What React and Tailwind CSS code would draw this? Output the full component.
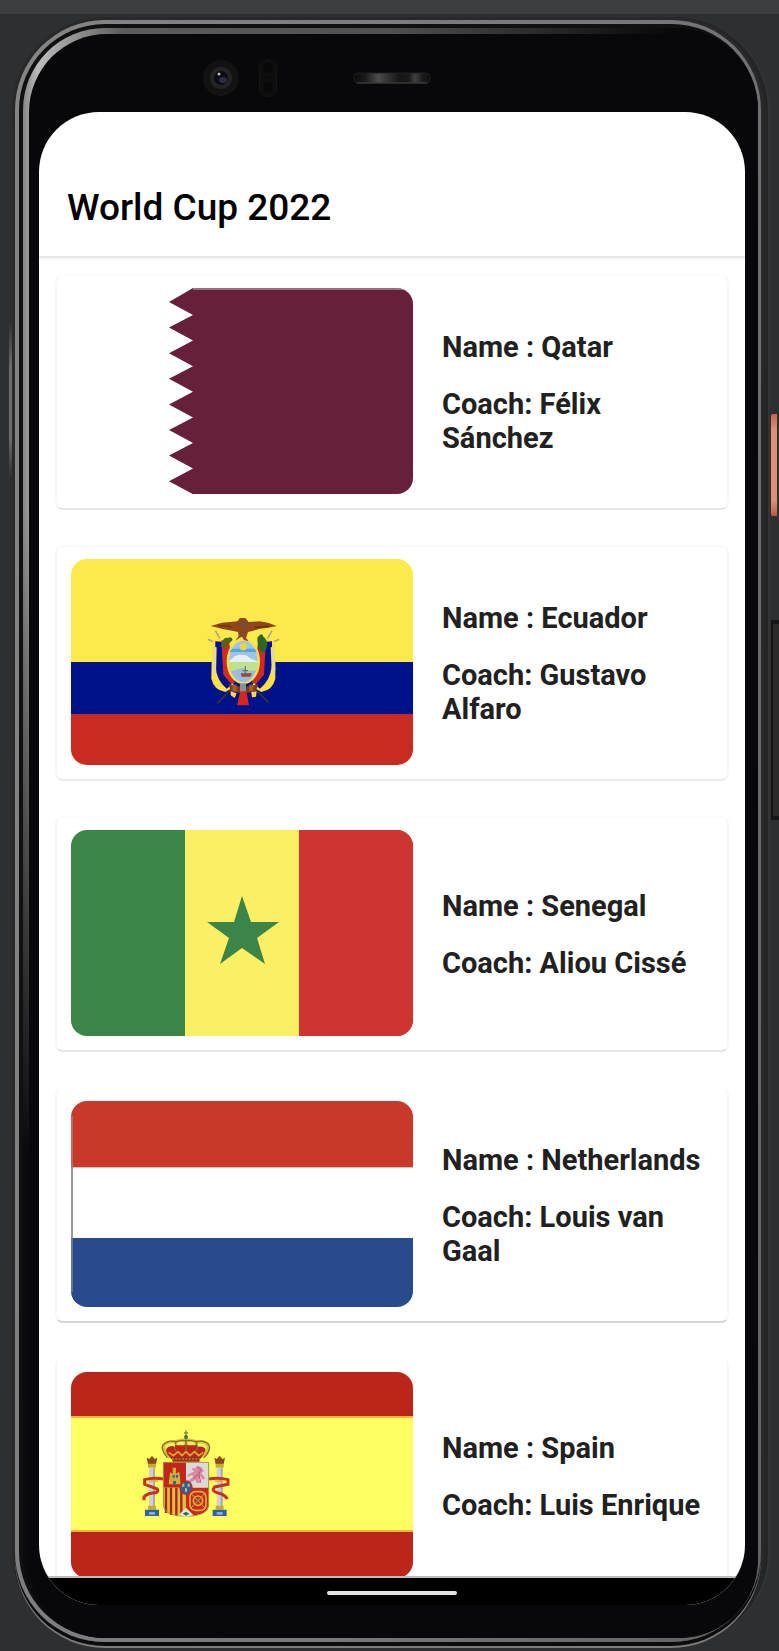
import React from "react";

function QatarFlag() {
  const teeth = [];
  for (let i = 0; i < 8; i++) {
    teeth.push(`98,${14 + i * 25.6} 122,${27 + i * 25.6}`);
  }
  return (
    <svg viewBox="0 0 342 206" className="block h-full w-full" aria-hidden="true">
      <rect width="342" height="206" fill="#fff" />
      <polygon points={`342,0 122,0 ${teeth.join(" ")} 342,206`} fill="#66203c" />
      <rect x="122" width="220" height="2" fill="#fff" opacity=".35" />
    </svg>
  );
}

function EcuadorFlag() {
  return (
    <svg viewBox="0 0 342 206" className="block h-full w-full" aria-hidden="true">
      <rect width="342" height="206" fill="#fce94c" />
      <rect y="103" width="342" height="52" fill="#00128a" />
      <rect y="155" width="342" height="51" fill="#c92a22" />
      <g transform="translate(119 41) scale(.3333)">
        <path d="M128 262L82 310M190 262l46 46" stroke="#33343c" strokeWidth="5" />
        <path d="M76 92l14 24M246 92l-14 24M54 118l30 14M268 118l-32 14" stroke="#b7a878" strokeWidth="5" />
        <path d="M66 128q8-16 24-12l18 60 24 84-26 16q-34-6-42-40z" fill="#fbe04c" />
        <path d="M256 128q-10-16-26-12l-16 60-28 84 28 16q34-6 42-40z" fill="#fbe04c" />
        <path d="M76 124l30 2 18 130-14 10q-30-22-34-70z" fill="#06128c" />
        <path d="M246 124l-30 2-20 130 14 10q30-22 36-70z" fill="#06128c" />
        <path d="M70 140l10 2-2 88-12-18zM254 140l-12 2 4 88 10-18z" fill="#e9dc88" />
        <path d="M94 120l24 10 16 118-10 4-24-28zM228 120l-24 10-18 118 12 4 24-28z" fill="#d12b20" />
        <ellipse cx="160" cy="184" rx="50" ry="69" fill="#f5df56" />
        <ellipse cx="160" cy="184" rx="43" ry="62" fill="#9cc4e8" />
        <path d="M126 146h68l6 10h-82z" fill="#4fa8e2" />
        <circle cx="160" cy="140" r="11" fill="#efd13e" />
        <path d="M117 184l18-16 14-4 20 2 14 10 20 8v4h-86z" fill="#e9eef5" />
        <path d="M117 186h86q0 16-6 26h-26l-14-8-34 10q-6-16-6-28z" fill="#bfe38b" />
        <path d="M124 214l34-10 14 8h24q-10 32-36 34-24-2-36-32z" fill="#9bbce0" />
        <path d="M152 220h34l-5 10h-26z" fill="#9b4a2c" />
        <path d="M166 198v22M158 212h16" stroke="#54617a" strokeWidth="3" />
        <path d="M92 138q8-30 22-24 12-6 14 6l-16 16-4 14z" fill="#466a20" />
        <path d="M104 122l10 14M98 140l12 6" stroke="#a33c20" strokeWidth="5" />
        <path d="M202 114q14-20 18-4 12 8 12 26-8 30-20 20-10-14-10-42z" fill="#2e6721" />
        <path d="M62 78l34-10 24-2 22-2 8-10h16l10 12 32-2 26 4 26 10-28 6-22 2-20 6-16 4-6 18 8 10-14-4-6-10-8 4-12 8 10-14-2-12-18-4-24-4z" fill="#8c471b" />
        <path d="M84 76l40 4M238 78l-44 4" stroke="#6b3011" strokeWidth="4" />
        <circle cx="160" cy="72" r="7" fill="#5b5560" />
        <path d="M116 252q44 16 88 0l-6 22q-38 10-76 0z" fill="#7d3d1b" />
        <path d="M128 254h12v20h-12zM178 254h12v20h-12z" fill="#a75c30" />
        <path d="M150 250h18v26h-18z" fill="#899299" />
        <path d="M122 274l18 6-6 14-12-8zM184 276l16-2-2 16-12 2z" fill="#fbd848" />
        <path d="M151 274h18l8 42h-36z" fill="#d5271d" />
      </g>
    </svg>
  );
}

function SenegalFlag() {
  return (
    <svg viewBox="0 0 342 206" className="block h-full w-full" aria-hidden="true">
      <rect width="342" height="206" fill="#3c8447" />
      <rect x="114" width="114" height="206" fill="#fbef63" />
      <rect x="228" width="114" height="206" fill="#cf3530" />
      <polygon
        points="171,66 180,92 208,92 186,108 194,134 171,118 149,134 158,108 136,92 163,92"
        fill="#3c8447"
      />
    </svg>
  );
}

function NetherlandsFlag() {
  return (
    <svg viewBox="0 0 342 206" className="block h-full w-full" aria-hidden="true">
      <rect width="342" height="206" fill="#fefefe" />
      <rect width="342" height="66" fill="#c8382b" />
      <rect y="66" width="342" height="1" fill="#e9bab5" />
      <rect y="137" width="342" height="69" fill="#294b8b" />
      <rect y="15" width="2" height="176" fill="#b5b5b5" opacity=".4" />
      <rect y="66" width="2" height="71" fill="#999" />
    </svg>
  );
}

function Pillar({ x }) {
  return (
    <g transform={`translate(${x} 0)`}>
      <path d="M-16 128l8 4 8-10 8 10 8-4-4 20h-24z" fill="#8a4a1c" />
      <path d="M-12 146h24v12h-24z" fill="#c8ab2e" />
      <path d="M-9 158h18v116h-18z" fill="#d0d0d6" />
      <path d="M3 158h6v116h-6z" fill="#a9a9b0" />
      <path d="M-12 272h24v12h-24z" fill="#c8ab2e" />
      <path d="M-21 284h42v19h-42z" fill="#2c61ad" />
      <path d="M-9 291h18v8h-18z" fill="#8eadd0" />
    </g>
  );
}

function SpainFlag() {
  return (
    <svg viewBox="0 0 342 206" className="block h-full w-full" aria-hidden="true">
      <rect width="342" height="206" fill="#ba271a" />
      <rect y="44" width="342" height="116" fill="#ecb63f" />
      <rect y="46" width="342" height="112" fill="#ffff61" />
      <g transform="translate(59 43) scale(.3333)">
        <Pillar x={66} />
        <Pillar x={269} />
        <path d="M100 192q-30-6-56 2v14l38 14q6 12-14 12-18 2-26 12v10M236 192q30-6 58 2v14l-40 8q-12 12 10 18 20 4 28 18" fill="none" stroke="#c43222" strokeWidth="9" />
        <path d="M58 198h26M254 198h26" stroke="#dda82e" strokeWidth="4" />
        <path d="M100 142h68v76h-68z" fill="#c02619" />
        <path d="M168 142h68v76h-68z" fill="#dadada" />
        <path d="M100 218h68v84q-66 0-68-30z" fill="#e0bd3a" />
        <path d="M108 218v76M123 218v82M139 218v84M154 218v84" stroke="#a92319" strokeWidth="7" />
        <path d="M168 218h68v54q-2 30-68 30z" fill="#c62b1d" />
        <rect x="180" y="230" width="48" height="56" rx="16" fill="none" stroke="#dfae35" strokeWidth="5" />
        <circle cx="204" cy="257" r="14" fill="none" stroke="#dfae35" strokeWidth="5" />
        <path d="M182 234l44 46M226 234l-44 46" stroke="#dfae35" strokeWidth="3" />
        <circle cx="204" cy="257" r="5" fill="#70934b" />
        <path d="M116 208l4-36 8 4v-18h10v18l10-6 4 38z" fill="#cfae33" />
        <path d="M128 180h6v8h-6zM138 180h6v8h-6zM129 198h9v10h-9z" fill="#3164a6" />
        <path d="M184 160h12l6-8 12 4 8 12-8 6 12 16-8 4-8-10-4 10 10 10h-16l-4-10-16 10-6-6 16-12-4-6-14 6 2-8 18-8z" fill="#dc8a9f" />
        <path d="M202 156l10 8-6 14-16 12M206 178l6 22" stroke="#b7506e" strokeWidth="3" fill="none" />
        <ellipse cx="168" cy="218" rx="20" ry="22" fill="#c62b1d" />
        <ellipse cx="168" cy="218" rx="16" ry="18" fill="#285fae" />
        <path d="M160 206v9M176 206v9M168 220v10" stroke="#dcc43d" strokeWidth="6" />
        <path d="M100 272q4 32 68 32t68-32V142H100z" fill="none" stroke="#a59049" strokeWidth="3" />
        <path d="M146 300l22-22 22 22-22 6z" fill="#e6e6e0" />
        <path d="M158 296l10-6 10 6-10 6z" fill="#287153" />
        <path d="M112 130q-20-24-15-38 12-18 38-16 32-12 66 0 28-4 39 16 4 16-18 38z" fill="#dbc33c" />
        <path d="M111 116q-6-16 4-23 18-4 53-4 36 0 52 4 10 8 2 23l-12 16h-86z" fill="#be2418" />
        <path d="M112 128q-22-28-13-38 14-16 40-10 28-8 58 0 30-6 40 10 8 12-14 38M137 108q-8-16 2-28M199 108q8-16-2-28M168 108V76" fill="none" stroke="#7f7227" strokeWidth="4" />
        <path d="M105 92q14-12 30-6v9q-16-6-28 8zM143 82q10-4 20 0v9h-22zM173 82q10-4 20 0l2 9h-22zM202 86q18-4 28 8l-2 8q-10-10-24-7z" fill="#fbf26b" />
        <path d="M116 112l14 10 14-12 12 12 12-12 12 12 14-12 12 12 14-10" fill="none" stroke="#d2ae33" strokeWidth="5" />
        <path d="M124 126h88l-4 14h-80z" fill="#98301a" />
        <path d="M126 132h84" stroke="#cba93a" strokeWidth="3" strokeDasharray="6 4" />
        <path d="M168 46v28M162 54h12" stroke="#8d8b36" strokeWidth="4" />
        <circle cx="168" cy="66" r="6" fill="#3d735b" />
      </g>
    </svg>
  );
}

const teams = [
  { name: "Qatar", coach: "Félix Sánchez", Flag: QatarFlag, edge: "border-t-[#fcfcfc] border-b-[#e8e8e8]" },
  { name: "Ecuador", coach: "Gustavo Alfaro", Flag: EcuadorFlag, edge: "border-t-[#f8f8f8] border-b-[#ececec]" },
  { name: "Senegal", coach: "Aliou Cissé", Flag: SenegalFlag, edge: "border-t-[#fcfcfc] border-b-[#e6e6e6]" },
  { name: "Netherlands", coach: "Louis van Gaal", Flag: NetherlandsFlag, edge: "border-t-[#fefefe] border-b-[#d6d6d6]" },
  { name: "Spain", coach: "Luis Enrique", Flag: SpainFlag, edge: "border-t-[#fefefe] border-b-[#d6d6d6]" },
];

function TeamCard({ name, coach, Flag, edge }) {
  return (
    <li className={`flex shrink-0 items-center gap-[29px] rounded-lg border-2 border-x-[#f7f7f7] px-3.5 pt-3 pb-3.5 ${edge}`}>
      <div className="h-[206px] w-[342px] shrink-0 overflow-hidden rounded-2xl">
        <Flag />
      </div>
      <div className="flex min-w-0 flex-1 flex-col gap-[23px] pt-[3px] text-[29px] leading-[34px] font-bold text-[#212121]">
        <h2>{`Name : ${name}`}</h2>
        <p>{`Coach: ${coach}`}</p>
      </div>
    </li>
  );
}

function TopHardware() {
  return (
    <div className="flex h-[78px] shrink-0 items-center pt-2.5 pl-[164px]">
      <svg width="36" height="36" viewBox="0 0 36 36" aria-hidden="true">
        <circle cx="18" cy="18" r="18" fill="#121213" />
        <circle cx="18" cy="18" r="11" fill="#242426" />
        <circle cx="18" cy="18" r="7" fill="#0b0b10" />
        <ellipse cx="20" cy="20" rx="4" ry="3" fill="#2b2d4c" />
        <circle cx="16" cy="14" r="1.5" fill="#b9b9bd" />
      </svg>
      <svg width="18" height="38" viewBox="0 0 18 38" className="ml-5" aria-hidden="true">
        <rect x=".5" y=".5" width="17" height="37" rx="8.5" fill="#0d0d0e" stroke="#161618" />
        <circle cx="9" cy="9" r="6" fill="#080809" stroke="#121213" />
        <circle cx="9" cy="28" r="6" fill="#080809" stroke="#121213" />
      </svg>
      <svg width="78" height="12" viewBox="0 0 78 12" className="ml-[76px]" aria-hidden="true">
        <defs>
          <linearGradient id="grille">
            <stop offset="0" stopColor="#0a0a0a" />
            <stop offset=".15" stopColor="#1b1b1b" />
            <stop offset=".32" stopColor="#4c4c4c" />
            <stop offset=".6" stopColor="#151515" />
            <stop offset=".72" stopColor="#191919" />
            <stop offset=".8" stopColor="#404040" />
            <stop offset=".9" stopColor="#1c1c1c" />
            <stop offset="1" stopColor="#0d0d0d" />
          </linearGradient>
        </defs>
        <rect x="1" y="1" width="76" height="10" rx="4" fill="url(#grille)" stroke="#1e1e1f" />
        <path d="M4 11h70" stroke="#454545" />
      </svg>
    </div>
  );
}

export default function App() {
  return (
    <div className="relative flex h-screen flex-col overflow-hidden bg-[#2e2f31] font-[Roboto,sans-serif]">
      <div className="h-3.5 shrink-0 bg-[#3d3e40]" />

      <div className="absolute top-[318px] left-[9px] h-[162px] w-1 rounded-sm bg-[linear-gradient(#2a2a2b,#6a6c6e_30%,#6a6c6e_75%,#2a2a2b)]" />
      <div className="absolute top-[414px] right-0.5 h-[102px] w-1.5 rounded-l-xs bg-[linear-gradient(#c4654e,#e28d74_15%,#e28d74_85%,#b95a44)]" />
      <div className="absolute top-[620px] right-0 h-[200px] w-2 border-y-4 border-l-2 border-[#161616] bg-[#2b2a2a]" />

      <div className="relative mt-1.5 mr-[18px] mb-[9px] ml-[15px] flex min-h-0 flex-1 flex-col rounded-[90px] bg-[linear-gradient(100deg,#858588,#77777b_60%,#606162)] p-1 pr-[3px] shadow-[0_4px_0_#0c0c0c,0_6px_0_#7c7c7c,0_0_0_3px_#292929,4px_0_0_3px_#242526,6px_0_0_3px_#333436]">
        <div className="flex min-h-0 flex-1 flex-col rounded-[86px] bg-[#101011] pt-1 pl-1">
          <div className="flex min-h-0 flex-1 flex-col rounded-[82px] bg-[linear-gradient(transparent_30%,#0a0a0c_70%),linear-gradient(90deg,#858585,#bcbcbc_15px,#5c5c5c_100px,#505050_50%,#08080a_88%)] pt-1.5 pl-1.5">
            <div className="flex min-h-0 flex-1 flex-col rounded-[78px] bg-[#08080a] pr-[13px] pb-[33px] pl-2.5">
              <TopHardware />

              <main className="flex min-h-0 flex-1 flex-col overflow-hidden rounded-[60px] bg-white">
                <header className="relative flex h-36 shrink-0 items-end px-7 pb-6 shadow-[0_2px_0_#e8e8e8,0_4px_4px_#0000000a]">
                  <h1 className="text-[37px] leading-[48px] font-medium text-black">World Cup 2022</h1>
                </header>
                <ul className="flex min-h-0 flex-1 flex-col gap-[35px] overflow-y-auto px-4 pt-[18px] [scrollbar-width:none]">
                  {teams.map((team) => (
                    <TeamCard key={team.name} {...team} />
                  ))}
                </ul>
                <nav className="flex h-[29px] shrink-0 items-center justify-center border-t-2 border-[#bdbdbd] bg-black pt-0.5" aria-label="System navigation">
                  <button type="button" aria-label="Home" className="h-1 w-[130px] rounded-xs bg-[#e4e4e4]" />
                </nav>
              </main>
            </div>
          </div>
        </div>
      </div>
    </div>
  );
}
